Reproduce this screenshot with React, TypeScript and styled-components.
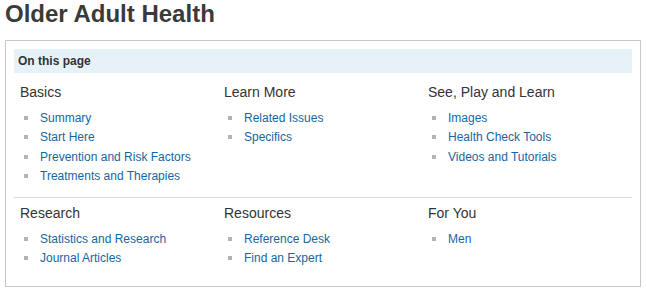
import React from "react";
import styled, { createGlobalStyle } from "styled-components";

const GlobalStyle = createGlobalStyle`
  html, body {
    margin: 0;
    padding: 0;
    background: #ffffff;
  }
  body {
    font-family: "Liberation Sans", Arial, Helvetica, sans-serif;
    color: #333333;
  }
`;

const Page = styled.div`
  padding: 0 5px;
`;

const Title = styled.h1`
  margin: 0 0 12px 0;
  font-size: 24px;
  line-height: 28px;
  font-weight: bold;
  color: #3a3a3a;
`;

const Box = styled.section`
  border: 1px solid #c6c6c6;
  padding: 8px;
`;

const BoxHeader = styled.div`
  height: 24px;
  line-height: 24px;
  padding-left: 4px;
  background: #e7f2f8;
  font-size: 12px;
  font-weight: bold;
  color: #333333;
`;

const Row = styled.div<{ $divided?: boolean; $top: number; $bottom: number }>`
  display: grid;
  grid-template-columns: repeat(3, 204px);
  padding: ${(p) => p.$top}px 0 ${(p) => p.$bottom}px 6px;
  border-top: ${(p) => (p.$divided ? "1px solid #dcdcdc" : "none")};
`;

const Column = styled.div`
  display: flex;
  flex-direction: column;
`;

const Heading = styled.h2`
  margin: 0 0 6px 0;
  font-size: 14px;
  line-height: 20px;
  font-weight: normal;
  color: #333333;
`;

const List = styled.ul`
  margin: 0;
  padding: 0;
  list-style: none;
`;

const Item = styled.li`
  display: flex;
  align-items: center;
  height: 19.5px;
  padding-left: 4px;
  font-size: 12px;
`;

const Bullet = styled.span`
  width: 4px;
  height: 4px;
  background: #b3b3b3;
  margin-right: 12px;
  flex: none;
`;

const Link = styled.a`
  color: #17669f;
  text-decoration: none;
  white-space: nowrap;
`;

type Group = { title: string; links: string[] };

const rows: { groups: Group[]; top: number; bottom: number; divided?: boolean }[] = [
  {
    top: 9,
    bottom: 11,
    groups: [
      {
        title: "Basics",
        links: ["Summary", "Start Here", "Prevention and Risk Factors", "Treatments and Therapies"],
      },
      { title: "Learn More", links: ["Related Issues", "Specifics"] },
      {
        title: "See, Play and Learn",
        links: ["Images", "Health Check Tools", "Videos and Tutorials"],
      },
    ],
  },
  {
    top: 5,
    bottom: 10,
    divided: true,
    groups: [
      { title: "Research", links: ["Statistics and Research", "Journal Articles"] },
      { title: "Resources", links: ["Reference Desk", "Find an Expert"] },
      { title: "For You", links: ["Men"] },
    ],
  },
];

export default function App() {
  return (
    <Page>
      <GlobalStyle />
      <Title>Older Adult Health</Title>
      <Box>
        <BoxHeader>On this page</BoxHeader>
        {rows.map((row, i) => (
          <Row key={i} $top={row.top} $bottom={row.bottom} $divided={row.divided}>
            {row.groups.map((g) => (
              <Column key={g.title}>
                <Heading>{g.title}</Heading>
                <List>
                  {g.links.map((l) => (
                    <Item key={l}>
                      <Bullet />
                      <Link href="#">{l}</Link>
                    </Item>
                  ))}
                </List>
              </Column>
            ))}
          </Row>
        ))}
      </Box>
    </Page>
  );
}
